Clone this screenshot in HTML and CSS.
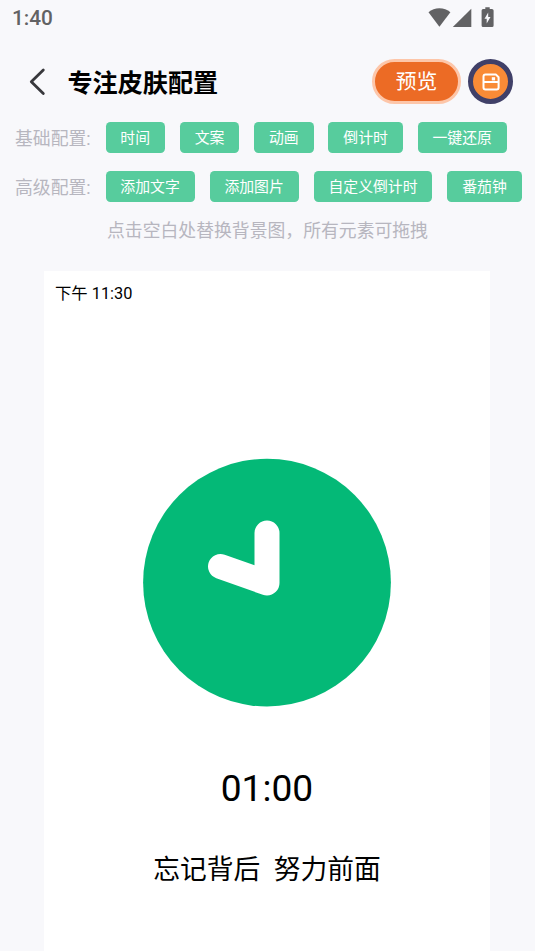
FILE: index.html
```html
<!DOCTYPE html>
<html lang="zh-CN">
<head>
<meta charset="utf-8">
<title>专注皮肤配置</title>
<link rel="stylesheet" href="styles.css">
</head>
<body>
<div class="status">
  <span class="status-time">1:40</span>
  <svg class="status-icons" width="68" height="22" viewBox="0 0 68 22" fill="#626264">
    <path d="M.5 5.300C3.500 2.800 7.300 1.300 11.400 1.300s8 1.500 11 4L11.400 19.700z"/>
    <path d="M43.300 1.700v18.300H24.800z"/>
    <path fill-rule="evenodd" d="M57.300.3h4.400v1.800h2.200q1.700 0 1.700 1.500v14.900q0 1.500-1.500 1.500h-9q-1.500 0-1.500-1.500V3.600q0-1.500 1.500-1.500h2.200zM60.200 5.500l-3.700 6.200h2.200v4.700l3.800-6.500h-2.300z"/>
  </svg>
</div>
<header class="header">
  <svg class="back" width="18" height="30" viewBox="0 0 18 30" fill="none" stroke="#38383c" stroke-width="2.800" stroke-linecap="round" stroke-linejoin="round"><path d="M15.300 3 3.300 14.700l12 11.800"/></svg>
  <h1 class="title">专注皮肤配置</h1>
  <div class="preview">预览</div>
  <div class="save">
    <svg width="18" height="18" viewBox="0 0 18 18" fill="none" stroke="#fff" stroke-width="2" stroke-linejoin="round"><path d="M3.500 1.600h10.500l2.600 2.600V14.600q0 2-2 2H3.500q-2 0-2-2V3.600q0-2 2-2zM1.500 9h15"/><path d="M9.800 4.200h3.300v3.200H9.800z" fill="#fff" stroke="none"/></svg>
  </div>
</header>
<main>
  <div class="row"><span class="label">基础配置:</span><span class="tag">时间</span><span class="tag">文案</span><span class="tag">动画</span><span class="tag">倒计时</span><span class="tag">一键还原</span></div>
  <div class="row"><span class="label">高级配置:</span><span class="tag">添加文字</span><span class="tag">添加图片</span><span class="tag">自定义倒计时</span><span class="tag">番茄钟</span></div>
  <p class="hint">点击空白处替换背景图，所有元素可拖拽</p>
  <section class="card">
    <div class="card-time">下午 11:30</div>
    <svg class="clock" width="248" height="248" viewBox="0 0 248 248"><circle cx="124" cy="123.600" r="123.900" fill="#04b977"/><path d="M124 74v50L77.500 107.500" fill="none" stroke="#fff" stroke-width="25" stroke-linecap="round" stroke-linejoin="round"/></svg>
    <div class="countdown">01:00</div>
    <div class="motto">忘记背后&nbsp; 努力前面</div>
  </section>
</main>
</body>
</html>
```

FILE: styles.css
```css
* { box-sizing: border-box; }
body {
  margin: 0;
  height: 951px;
  overflow: hidden;
  background: #f8f8fb;
  color: #000;
  font-family: Roboto, "Noto Sans CJK SC", sans-serif;
}
.status {
  display: flex;
  justify-content: space-between;
  height: 37px;
  padding: 7px 39px 0 12px;
}
.status-time {
  font-size: 20.8px;
  font-weight: 500;
  line-height: 23px;
  color: #626264;
}
.header {
  display: flex;
  align-items: center;
  height: 85px;
  padding: 4px 22px 0 28px;
}
.title {
  margin: 0 auto 0 21.5px;
  padding-top: 4px;
  font-size: 25.1px;
  font-weight: 700;
  line-height: 36px;
}
.preview {
  width: 89px;
  height: 45px;
  margin-right: 7px;
  border: 3px solid #fdc6a9;
  border-radius: 23px;
  background: #ec6b25;
  color: #fff;
  font-size: 20.8px;
  line-height: 41px;
  text-align: center;
}
.save {
  display: flex;
  align-items: center;
  justify-content: center;
  width: 45px;
  height: 45px;
  border: 5px solid #404068;
  border-radius: 50%;
  background: #f98b36;
}
.row {
  display: flex;
  align-items: center;
  gap: 14.86px;
  height: 31px;
  margin-bottom: 18px;
  padding-left: 15px;
  white-space: nowrap;
}
.label {
  padding-bottom: 2px;
  color: #b7b6bf;
  font-size: 17.83px;
}
.tag {
  height: 31px;
  padding: 0 14.86px;
  border-radius: 4.5px;
  background: #57cc9d;
  color: #fff;
  font-size: 14.86px;
  line-height: 33px;
}
.hint {
  margin: -2px 0 0;
  height: 53px;
  color: #b7b6bf;
  font-size: 17.83px;
  line-height: 26px;
  text-align: center;
}
.card {
  display: flex;
  flex-direction: column;
  align-items: center;
  width: 446px;
  height: 700px;
  margin-left: 44px;
  background: #fff;
}
.card-time {
  align-self: flex-start;
  height: 187.6px;
  padding: 11px 0 0 11px;
  font-size: 16.35px;
  line-height: 24px;
}
.clock { overflow: visible; }
.countdown {
  margin-top: 57px;
  font-size: 37.15px;
  line-height: 50px;
}
.motto {
  margin-top: 36px;
  font-size: 26.75px;
  line-height: 40px;
}
```
